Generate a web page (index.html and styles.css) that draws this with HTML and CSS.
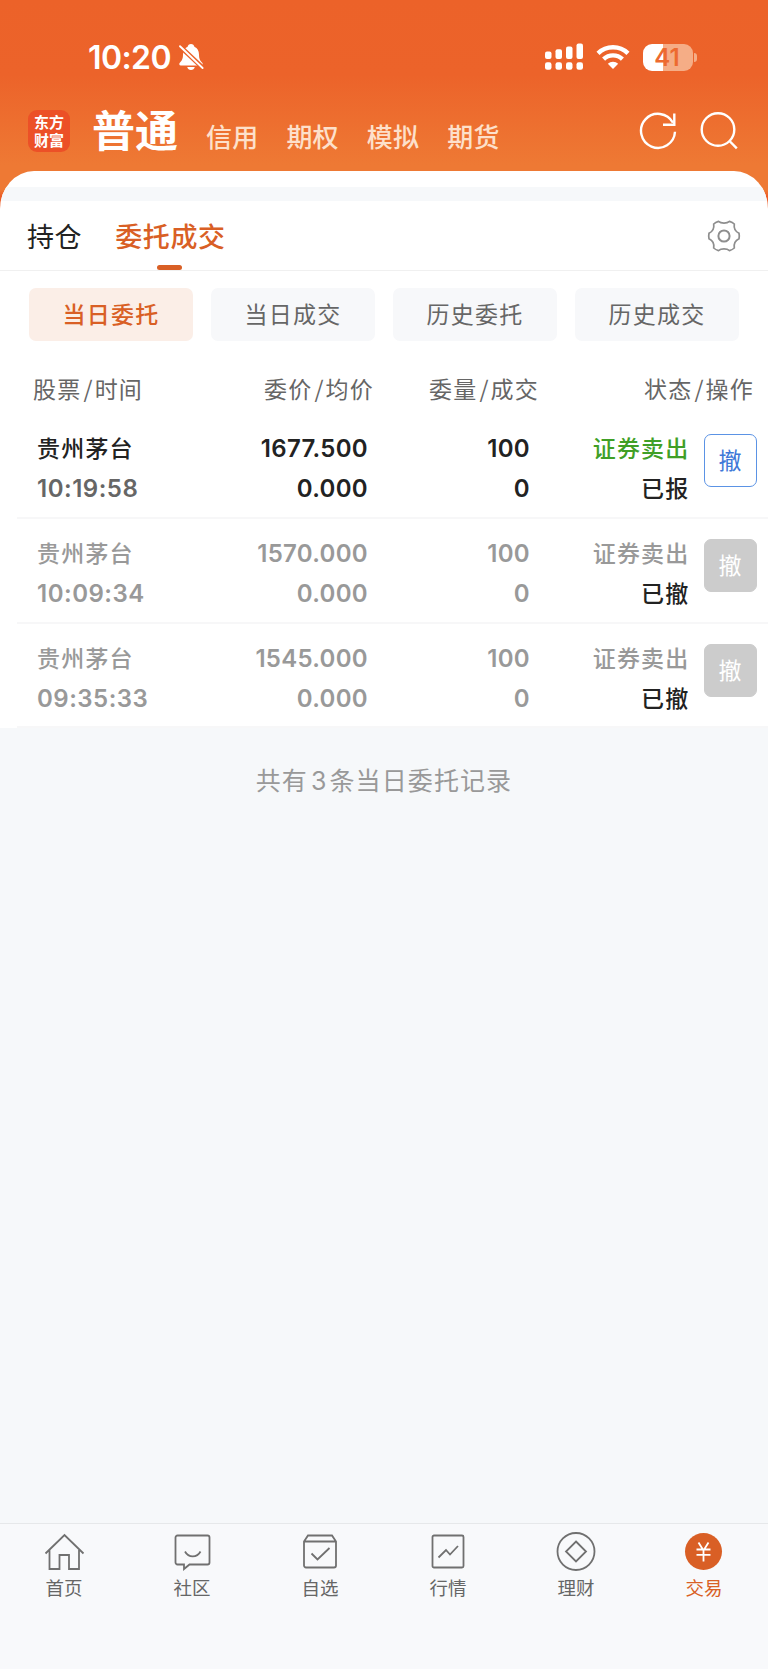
FILE: index.html
```
<!DOCTYPE html>
<html lang="zh-CN">
<head>
  <meta charset="UTF-8" />
  <meta name="viewport" content="width=device-width, initial-scale=1.0"/>
  <title>委托成交</title>
  <link rel="stylesheet" href="styles.css">
</head>
<body>
  <header class="header">
    <div class="status-bar">
      <span class="clock">10:20</span>
      <svg class="bell" width="26" height="28" viewBox="0 0 26 28">
        <path fill="#fff" d="M13 1c-1.900 0-3.100 1.200-3.400 2.700C6.500 5 5 7.700 5 11.500c0 4.500-1.200 6.300-3.200 8.200-.9 1-.6 2.700 1 2.700h20.400c1.600 0 1.900-1.700 1-2.700-2-1.900-3.200-3.700-3.200-8.200 0-3.800-1.500-6.500-4.600-7.800C16.100 2.200 14.900 1 13 1zM9.200 24h7.600c-.5 1.900-1.900 3-3.800 3s-3.300-1.100-3.800-3z"/>
        <path stroke="#ec632a" stroke-width="4.600" d="M1 2.500 25 25"/>
        <path stroke="#fff" stroke-width="1.900" stroke-linecap="round" d="M2 3.200 24.600 25"/>
      </svg>
      <svg class="signal" width="39" height="28" viewBox="0 0 39 28" fill="#fff">
        <rect x="0" y="8.500" width="6.500" height="7.500" rx="2"/>
        <rect x="10.500" y="6.300" width="6.500" height="9.700" rx="2"/>
        <rect x="21" y="3.500" width="6.500" height="12.500" rx="2"/>
        <rect x="31.500" y="0.500" width="6.500" height="15.500" rx="2"/>
        <rect x="0" y="19.200" width="6.500" height="7.500" rx="2.200"/>
        <rect x="10.500" y="19.200" width="6.500" height="7.500" rx="2.200"/>
        <rect x="21" y="19.200" width="6.500" height="7.500" rx="2.200"/>
        <rect x="31.500" y="19.200" width="6.500" height="7.500" rx="2.200"/>
      </svg>
      <svg class="wifi" width="34" height="26" viewBox="0 0 34 26">
        <g fill="none" stroke="#fff" stroke-width="4.400">
          <path d="M2 9.400a21.500 21.500 0 0 1 30 0"/>
          <path d="M7.600 15.200a13.500 13.500 0 0 1 18.800 0"/>
        </g>
        <path fill="#fff" d="M11.800 19.800a7.500 7.500 0 0 1 10.400 0L17 25z"/>
      </svg>
      <div class="battery"><span>41</span></div>
    </div>
    <nav class="accounts">
      <div class="logo"><span>东方</span><span>财富</span></div>
      <a class="account current">普通</a>
      <a class="account">信用</a>
      <a class="account">期权</a>
      <a class="account">模拟</a>
      <a class="account">期货</a>
      <svg class="refresh" width="38" height="38" viewBox="0 0 38 38" fill="none" stroke="#fff" stroke-width="2.400">
        <path d="M36 19.800A17 17 0 1 1 34 10.800"/>
        <path d="M35.300 1.500v11.300H24"/>
      </svg>
      <svg class="search" width="38" height="38" viewBox="0 0 38 38" fill="none" stroke="#fff" stroke-width="2.400">
        <circle cx="18" cy="17.500" r="16.300"/>
        <path d="M29.500 29 36.800 36.300"/>
      </svg>
    </nav>
  </header>

  <main class="sheet">
    <div class="strip"></div>
    <nav class="tabs">
      <a class="tab">持仓</a>
      <a class="tab active">委托成交</a>
      <svg class="gear" width="34" height="32" viewBox="-17 -16 34 32" fill="none" stroke="#8e8e8e" stroke-width="1.700">
        <path d="M-5.500-14.600C-3-12.400 3-12.400 5.500-14.600Q8.500-13.700 10.300-12C9.700-8 11.300-4.500 15-2.800Q15.600 0 15 2.800C11.300 4.500 9.700 8 10.300 12Q8.500 13.700 5.500 14.600C3 12.400-3 12.400-5.500 14.600Q-8.500 13.700-10.300 12C-9.700 8-11.300 4.500-15 2.800Q-15.600 0-15-2.800C-11.300-4.500-9.700-8-10.300-12Q-8.500-13.700-5.500-14.600z"/>
        <circle r="5.600" stroke-width="2"/>
      </svg>
    </nav>

    <div class="chips">
      <a class="chip active">当日委托</a>
      <a class="chip">当日成交</a>
      <a class="chip">历史委托</a>
      <a class="chip">历史成交</a>
    </div>

    <div class="table-head">
      <span>股票<i>/</i>时间</span>
      <span>委价<i>/</i>均价</span>
      <span>委量<i>/</i>成交</span>
      <span>状态<i>/</i>操作</span>
    </div>

    <div class="order">
      <div class="cell"><b>贵州茅台</b><span class="num time">10:19:58</span></div>
      <div class="cell"><span class="num">1677.500</span><span class="num">0.000</span></div>
      <div class="cell"><span class="num">100</span><span class="num">0</span></div>
      <div class="cell"><b class="sell">证券卖出</b><b class="state">已报</b></div>
      <button class="cancel">撤</button>
    </div>
    <div class="order done">
      <div class="cell"><b>贵州茅台</b><span class="num time">10:09:34</span></div>
      <div class="cell"><span class="num">1570.000</span><span class="num">0.000</span></div>
      <div class="cell"><span class="num">100</span><span class="num">0</span></div>
      <div class="cell"><b class="sell">证券卖出</b><b class="state">已撤</b></div>
      <button class="cancel">撤</button>
    </div>
    <div class="order done">
      <div class="cell"><b>贵州茅台</b><span class="num time">09:35:33</span></div>
      <div class="cell"><span class="num">1545.000</span><span class="num">0.000</span></div>
      <div class="cell"><span class="num">100</span><span class="num">0</span></div>
      <div class="cell"><b class="sell">证券卖出</b><b class="state">已撤</b></div>
      <button class="cancel">撤</button>
    </div>
  </main>

  <p class="summary">共有<span>3</span>条当日委托记录</p>

  <nav class="tabbar">
    <a class="item">
      <svg width="40" height="40" viewBox="0 0 40 40">
        <path d="M1.500 21.500 20.500 3l19 18.500M5.500 18v19h10V23h9.500v14h10V18"/>
      </svg>
      首页
    </a>
    <a class="item">
      <svg width="40" height="40" viewBox="0 0 40 40">
        <path d="M5.500 3.500h30a2 2 0 0 1 2 2v25a2 2 0 0 1-2 2H17.500l-5.500 4.500v-4.500H5.500a2 2 0 0 1-2-2v-25a2 2 0 0 1 2-2zM13 19.500c3.500 6.500 12 6.500 15.500 0"/>
      </svg>
      社区
    </a>
    <a class="item">
      <svg width="40" height="40" viewBox="0 0 40 40">
        <path d="M4 9.500 8 3.500h24l4 6v24a2 2 0 0 1-2 2H6a2 2 0 0 1-2-2zM4 9.500h32M11.500 21.500l6 6L29.500 16"/>
      </svg>
      自选
    </a>
    <a class="item">
      <svg width="40" height="40" viewBox="0 0 40 40">
        <rect x="4.500" y="3.500" width="31" height="32" rx="1.500"/>
        <path d="m10.500 25.500 7.500-7.500 4 4.500 8-8.500"/>
      </svg>
      行情
    </a>
    <a class="item">
      <svg width="40" height="40" viewBox="0 0 40 40">
        <circle cx="20" cy="19.500" r="18.500"/>
        <path d="m20 9.500 10 10-10 10-10-10z"/>
      </svg>
      理财
    </a>
    <a class="item active">
      <svg width="40" height="40" viewBox="0 0 40 40">
        <circle class="coin" cx="19.500" cy="19.500" r="18.500"/>
        <path class="yen" d="m14.500 10.500 5 8 5-8M19.500 18v11.500M12.500 17.500h14M12.500 22.800h14"/>
      </svg>
      交易
    </a>
  </nav>
</body>
</html>
```
FILE: styles.css
```
* {
  box-sizing: border-box;
}
body {
  margin: 0;
  width: 768px;
  height: 1669px;
  display: flex;
  flex-direction: column;
  font-family: 'Noto Sans CJK SC', sans-serif;
  background-color: #f6f8fa;
  color: #222;
}
.header {
  height: 211px;
  background: linear-gradient(#ec6229 0, #ec632a 75px, #ee7934 165px, #ee7934 190px, #ec5c26 196px);
}
.status-bar {
  display: flex;
  align-items: center;
  height: 86px;
  padding: 28px 75px 0 88px;
}
.clock {
  font-family: Inter, sans-serif;
  font-size: 32px;
  font-weight: 600;
  letter-spacing: -0.600px;
  color: #fff;
}
.bell {
  margin-left: 7px;
}
.signal {
  margin-left: auto;
}
.wifi {
  margin: 0 13px 0 12px;
}
.battery {
  position: relative;
  width: 50px;
  height: 27px;
  padding-right: 2px;
  border-radius: 9px;
  background: linear-gradient(90deg, #fff 20px, #f5ad86 20px);
  font: 600 24px/27px Inter, sans-serif;
  text-align: center;
  color: #ed6a30;
}
.battery::after {
  content: "";
  position: absolute;
  left: 51px;
  top: 9px;
  width: 3px;
  height: 9px;
  border-radius: 0 4px 4px 0;
  background-color: #f5ad86;
}
.accounts {
  display: flex;
  align-items: flex-start;
  height: 85px;
  padding: 0 30px 0 28px;
  color: #fff;
}
.logo {
  display: flex;
  flex-direction: column;
  align-items: center;
  width: 42px;
  height: 42px;
  margin: 24px 22px 0 0;
  padding-top: 3px;
  border-radius: 9px;
  background-color: #ec5027;
  font-size: 15px;
  font-weight: 700;
  line-height: 17.500px;
}
.account {
  margin: 32px 28px 0 0;
  font-size: 26px;
  font-weight: 500;
  line-height: 36px;
  letter-spacing: 0.200px;
  color: #fde0cb;
}
.account.current {
  margin: 14px 28px 0 0;
  font-size: 43px;
  font-weight: 700;
  line-height: 56px;
  letter-spacing: 0;
  color: #fff;
}
.refresh {
  margin: 26px 23px 0 auto;
}
.search {
  margin-top: 26px;
}
.sheet {
  margin-top: -40px;
  padding-top: 16px;
  border-radius: 34px 34px 0 0 / 38px 38px 0 0;
  background-color: #fff;
  overflow: hidden;
}
.strip {
  height: 14px;
  background-color: #f6f8fa;
}
.tabs {
  display: flex;
  align-items: center;
  height: 70px;
  padding: 0 27px;
  border-bottom: 1px solid #f0f0f0;
}
.tab {
  position: relative;
  margin-right: 33px;
  font-size: 27px;
  line-height: 67px;
  letter-spacing: 0.600px;
}
.tab.active {
  font-weight: 500;
  color: #d95f25;
}
.tab.active::after {
  content: "";
  position: absolute;
  left: 42px;
  bottom: -1px;
  width: 25px;
  height: 5px;
  border-radius: 3px;
  background-color: #d95f25;
}
.gear {
  margin-left: auto;
}
.chips {
  display: grid;
  grid-template-columns: repeat(4, 164px);
  justify-content: space-between;
  padding: 17px 29px 0;
}
.chip {
  height: 53px;
  border-radius: 7px;
  background-color: #f7f8fa;
  font-size: 23px;
  line-height: 51px;
  letter-spacing: 1.200px;
  text-align: center;
  color: #666;
}
.chip.active {
  background-color: #fbeee7;
  font-weight: 500;
  color: #d95f25;
}
.table-head {
  display: grid;
  grid-template-columns: 155px 186px 165px 215px;
  padding: 30px 0 0 33px;
  font-size: 23px;
  line-height: 34px;
  letter-spacing: 1.200px;
  text-align: right;
  color: #666;
}
.table-head span:first-child {
  text-align: left;
}
.table-head i {
  margin: 0 1px 0 2px;
  font-style: normal;
}
.order {
  display: grid;
  grid-template-columns: 150px 181px 162px 159.500px 53px;
  height: 104.600px;
  margin-left: 17px;
  padding: 13px 0 0 20px;
  border-bottom: 2px solid #f7f7f8;
}
.table-head + .order {
  height: 114px;
  padding-top: 22px;
}
.cell {
  display: flex;
  flex-direction: column;
  font-size: 23px;
  line-height: 40px;
  letter-spacing: 1.200px;
  text-align: right;
}
.cell:first-child {
  text-align: left;
}
.cell b {
  font-weight: 500;
}
.num {
  padding-top: 3px;
  font-family: Inter, sans-serif;
  font-size: 24px;
  font-weight: 600;
  line-height: 37px;
  letter-spacing: 0.300px;
}
.time {
  letter-spacing: 0.500px;
  color: #666;
}
.sell {
  color: #409f26;
}
.done .cell,
.done .time,
.done .sell {
  color: #999;
}
.done .state {
  color: #222;
}
.cancel {
  width: 53px;
  height: 53px;
  margin: 7px 0 0 14px;
  padding: 0 0 3px;
  border: 1px solid #5b93e5;
  border-radius: 7px;
  background-color: #fff;
  font-family: inherit;
  font-size: 23px;
  color: #3e78d8;
}
.done .cancel {
  border-color: #ccc;
  background-color: #ccc;
  color: #fff;
}
.summary {
  margin: 33px 0 0;
  font-size: 25px;
  line-height: 36px;
  letter-spacing: 1.100px;
  text-align: center;
  color: #999;
}
.summary span {
  margin: 0 2px 0 3px;
  font-family: Inter, sans-serif;
}
.tabbar {
  display: grid;
  grid-template-columns: repeat(6, 128px);
  height: 146px;
  margin-top: auto;
  padding-top: 8px;
  border-top: 1px solid #e6e8ea;
  background-color: #f8f9fb;
}
.item {
  display: flex;
  flex-direction: column;
  align-items: center;
  font-size: 18.500px;
  line-height: 30px;
  color: #666;
}
.item svg {
  overflow: visible;
  fill: none;
  stroke: #707070;
  stroke-width: 1.800;
}
.item.active {
  color: #d95f25;
}
.item .coin {
  fill: #d95f25;
  stroke: none;
}
.item .yen {
  stroke: #fff;
}
```
